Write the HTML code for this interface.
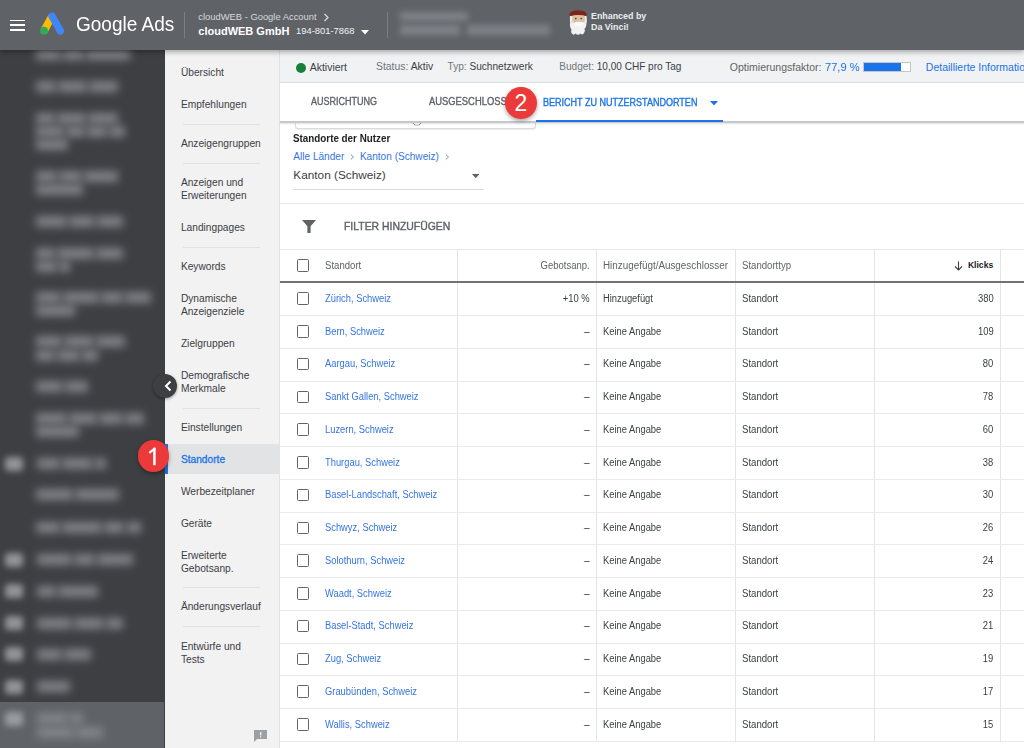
<!DOCTYPE html>
<html><head><meta charset="utf-8"><style>
html,body{margin:0;padding:0;width:1024px;height:748px;overflow:hidden;background:#fff}
body{position:relative;font-family:"Liberation Sans",sans-serif}
.t{position:absolute;white-space:nowrap}
.r{position:absolute}
.cb{position:absolute;width:12.5px;height:12.5px;box-sizing:border-box;border:1.9px solid #616468;border-radius:1.5px}
.badge{position:absolute;width:31px;height:31px;border-radius:50%;background:#ec3a3a;color:#fff;font-size:23px;line-height:33px;text-align:center;box-shadow:0 2px 4px rgba(0,0,0,.35);z-index:8}
</style></head><body>
<div class="r" style="left:0px;top:0px;width:1024px;height:748px;background:#ffffff;"></div>
<div class="r" style="left:0px;top:50px;width:165px;height:698px;background:#3d3f43;"></div>
<div class="r" style="left:0px;top:702px;width:163.5px;height:46px;background:#5f6368;"></div>
<div class="r" style="left:165px;top:50px;width:114px;height:698px;background:#f2f2f3;"></div>
<div class="r" style="left:279px;top:50px;width:1px;height:698px;background:#e0e2e4;"></div>
<div class="r" style="left:280px;top:50px;width:744px;height:32.5px;background:#f1f2f3;"></div>
<div class="r" style="left:280px;top:82px;width:744px;height:1px;background:#dadce0;"></div>
<div class="r" style="left:280px;top:83px;width:744px;height:38px;background:#ffffff;"></div>
<div class="r" style="left:280px;top:121px;width:744px;height:1.6px;background:#c6c8cb;box-shadow:0 1px 2px rgba(0,0,0,.12);z-index:2;"></div>
<div class="r" style="left:0px;top:0px;width:1024px;height:49.6px;background:#5f6368;box-shadow:0 2px 5px rgba(0,0,0,.32);z-index:5;"></div>
<div class="r" style="left:9.6px;top:19.6px;width:15.8px;height:1.8px;background:#ffffff;z-index:6;"></div>
<div class="r" style="left:9.6px;top:24.4px;width:15.8px;height:1.8px;background:#ffffff;z-index:6;"></div>
<div class="r" style="left:9.6px;top:29.2px;width:15.8px;height:1.8px;background:#ffffff;z-index:6;"></div>
<svg class="r" style="left:0;top:0;width:80px;height:50px;z-index:6" viewBox="0 0 80 50">
<path d="M51.8 16.6 L44 30.9" stroke="#fbbc04" stroke-width="7.6" stroke-linecap="butt"/>
<path d="M52.1 16.2 L60.3 30.9" stroke="#4285f4" stroke-width="7.4" stroke-linecap="round"/>
<circle cx="44" cy="30.8" r="4" fill="#34a853"/>
</svg>
<div class="t " style="left:75.50px;top:11.75px;font-size:21px;line-height:24.15px;color:#ffffff;font-weight:400;transform:scaleX(0.9053);transform-origin:left center;z-index:6;">Google Ads</div>
<div class="r" style="left:184px;top:12px;width:1.2px;height:25.6px;background:#7b7f84;z-index:6;"></div>
<div class="t " style="left:198.30px;top:12.14px;font-size:9.4px;line-height:10.81px;color:#d5d7da;font-weight:400;z-index:6;">cloudWEB - Google Account</div>
<svg class="r" style="left:323px;top:13px;width:7px;height:9px;z-index:6" viewBox="0 0 7 9"><path d="M1.5 1 L5 4.5 L1.5 8" stroke="#d5d7da" stroke-width="1.3" fill="none"/></svg>
<div class="t " style="left:198.30px;top:24.66px;font-size:11px;line-height:12.65px;color:#ffffff;font-weight:700;z-index:6;">cloudWEB GmbH</div>
<div class="t " style="left:296.00px;top:26.14px;font-size:9.4px;line-height:10.81px;color:#f1f3f4;font-weight:400;z-index:6;">194-801-7868</div>
<svg class="r" style="left:360.5px;top:29.5px;width:8px;height:5px;z-index:6" viewBox="0 0 8 5"><path d="M0 0 L8 0 L4 4.5Z" fill="#ffffff"/></svg>
<div class="r" style="left:386.6px;top:12px;width:1.2px;height:25.6px;background:#7b7f84;z-index:6;"></div>
<div class="r" style="left:400px;top:11.5px;width:68px;height:9px;background:#7f8388;filter:blur(3.4px);z-index:6"></div>
<div class="r" style="left:400px;top:24.5px;width:60px;height:10px;background:#7f8388;filter:blur(3.4px);z-index:6"></div>
<div class="r" style="left:467px;top:24.5px;width:83px;height:10px;background:#7f8388;filter:blur(3.4px);z-index:6"></div>
<svg class="r" style="left:560px;top:0;width:40px;height:40px;z-index:6" viewBox="560 0 40 40">
<path d="M570.5 21 Q569 27 571.5 29.5 Q570.5 33 572.5 34 Q574 35.5 575.5 33.5 Q578 36 580.5 33.5 Q582.5 35.5 584 33 Q585.5 31 584.5 29 Q587.5 26 585.8 20 Z" fill="#f2f2f2"/>
<path d="M570 16 Q569.5 22 571 24 L586 24 Q587.5 21 586.5 16 Z" fill="#ececec"/>
<rect x="572.3" y="14.5" width="12.5" height="8.5" rx="2.5" fill="#dcc0a4"/>
<circle cx="575.8" cy="18.6" r="0.8" fill="#4a3a30"/><circle cx="581.2" cy="18.6" r="0.8" fill="#4a3a30"/>
<path d="M573 23 Q578.5 20.5 584.5 23 Q583 26 578.5 26 Q574 26 573 23Z" fill="#fafafa"/>
<path d="M569.3 15.8 Q568.6 10.5 578 10.2 Q587.5 10.5 586.8 15.8 Q578 14.3 569.3 15.8Z" fill="#7c231b"/>
</svg>
<div class="t " style="left:591.00px;top:10.60px;font-size:8.9px;line-height:10.23px;color:#eceef0;font-weight:700;z-index:6;">Enhanced by</div>
<div class="t " style="left:591.00px;top:22.00px;font-size:8.9px;line-height:10.23px;color:#eceef0;font-weight:700;z-index:6;">Da Vinci!</div>
<div class="r" style="left:36.0px;top:48.5px;width:25.1px;height:11px;background:#85888d;filter:blur(4.2px);opacity:.9"></div>
<div class="r" style="left:63.1px;top:48.5px;width:21.3px;height:11px;background:#85888d;filter:blur(4.2px);opacity:.9"></div>
<div class="r" style="left:86.4px;top:48.5px;width:43.6px;height:11px;background:#85888d;filter:blur(4.2px);opacity:.9"></div>
<div class="r" style="left:36.0px;top:80.5px;width:19.6px;height:11px;background:#85888d;filter:blur(4.2px);opacity:.9"></div>
<div class="r" style="left:57.6px;top:80.5px;width:29.8px;height:11px;background:#85888d;filter:blur(4.2px);opacity:.9"></div>
<div class="r" style="left:89.4px;top:80.5px;width:28.6px;height:11px;background:#85888d;filter:blur(4.2px);opacity:.9"></div>
<div class="r" style="left:36.0px;top:112.5px;width:19.3px;height:11px;background:#85888d;filter:blur(4.2px);opacity:.9"></div>
<div class="r" style="left:57.3px;top:112.5px;width:29.2px;height:11px;background:#85888d;filter:blur(4.2px);opacity:.9"></div>
<div class="r" style="left:88.4px;top:112.5px;width:29.6px;height:11px;background:#85888d;filter:blur(4.2px);opacity:.9"></div>
<div class="r" style="left:36.0px;top:125.5px;width:27.5px;height:11px;background:#85888d;filter:blur(4.2px);opacity:.9"></div>
<div class="r" style="left:65.5px;top:125.5px;width:19.5px;height:11px;background:#85888d;filter:blur(4.2px);opacity:.9"></div>
<div class="r" style="left:87.1px;top:125.5px;width:20.0px;height:11px;background:#85888d;filter:blur(4.2px);opacity:.9"></div>
<div class="r" style="left:109.1px;top:125.5px;width:15.9px;height:11px;background:#85888d;filter:blur(4.2px);opacity:.9"></div>
<div class="r" style="left:36.0px;top:138.5px;width:32.0px;height:11px;background:#85888d;filter:blur(4.2px);opacity:.9"></div>
<div class="r" style="left:36.0px;top:170.5px;width:20.7px;height:11px;background:#85888d;filter:blur(4.2px);opacity:.9"></div>
<div class="r" style="left:58.7px;top:170.5px;width:22.9px;height:11px;background:#85888d;filter:blur(4.2px);opacity:.9"></div>
<div class="r" style="left:83.6px;top:170.5px;width:34.4px;height:11px;background:#85888d;filter:blur(4.2px);opacity:.9"></div>
<div class="r" style="left:36.0px;top:183.5px;width:47.0px;height:11px;background:#85888d;filter:blur(4.2px);opacity:.9"></div>
<div class="r" style="left:36.0px;top:215.5px;width:30.7px;height:11px;background:#85888d;filter:blur(4.2px);opacity:.9"></div>
<div class="r" style="left:68.7px;top:215.5px;width:26.7px;height:11px;background:#85888d;filter:blur(4.2px);opacity:.9"></div>
<div class="r" style="left:97.4px;top:215.5px;width:25.6px;height:11px;background:#85888d;filter:blur(4.2px);opacity:.9"></div>
<div class="r" style="left:36.0px;top:247.5px;width:19.0px;height:11px;background:#85888d;filter:blur(4.2px);opacity:.9"></div>
<div class="r" style="left:57.0px;top:247.5px;width:36.9px;height:11px;background:#85888d;filter:blur(4.2px);opacity:.9"></div>
<div class="r" style="left:95.9px;top:247.5px;width:27.1px;height:11px;background:#85888d;filter:blur(4.2px);opacity:.9"></div>
<div class="r" style="left:36.0px;top:260.5px;width:21.2px;height:11px;background:#85888d;filter:blur(4.2px);opacity:.9"></div>
<div class="r" style="left:59.2px;top:260.5px;width:10.8px;height:11px;background:#85888d;filter:blur(4.2px);opacity:.9"></div>
<div class="r" style="left:36.0px;top:292.1px;width:24.8px;height:11px;background:#85888d;filter:blur(4.2px);opacity:.9"></div>
<div class="r" style="left:62.8px;top:292.1px;width:36.0px;height:11px;background:#85888d;filter:blur(4.2px);opacity:.9"></div>
<div class="r" style="left:100.7px;top:292.1px;width:22.0px;height:11px;background:#85888d;filter:blur(4.2px);opacity:.9"></div>
<div class="r" style="left:124.7px;top:292.1px;width:26.3px;height:11px;background:#85888d;filter:blur(4.2px);opacity:.9"></div>
<div class="r" style="left:36.0px;top:305.0px;width:39.0px;height:11px;background:#85888d;filter:blur(4.2px);opacity:.9"></div>
<div class="r" style="left:36.0px;top:335.5px;width:26.2px;height:11px;background:#85888d;filter:blur(4.2px);opacity:.9"></div>
<div class="r" style="left:64.2px;top:335.5px;width:30.1px;height:11px;background:#85888d;filter:blur(4.2px);opacity:.9"></div>
<div class="r" style="left:96.2px;top:335.5px;width:28.8px;height:11px;background:#85888d;filter:blur(4.2px);opacity:.9"></div>
<div class="r" style="left:36.0px;top:349.9px;width:19.3px;height:11px;background:#85888d;filter:blur(4.2px);opacity:.9"></div>
<div class="r" style="left:57.3px;top:349.9px;width:22.5px;height:11px;background:#85888d;filter:blur(4.2px);opacity:.9"></div>
<div class="r" style="left:81.8px;top:349.9px;width:16.2px;height:11px;background:#85888d;filter:blur(4.2px);opacity:.9"></div>
<div class="r" style="left:36.0px;top:381.0px;width:27.4px;height:11px;background:#85888d;filter:blur(4.2px);opacity:.9"></div>
<div class="r" style="left:65.4px;top:381.0px;width:22.6px;height:11px;background:#85888d;filter:blur(4.2px);opacity:.9"></div>
<div class="r" style="left:36.0px;top:413.1px;width:30.9px;height:11px;background:#85888d;filter:blur(4.2px);opacity:.9"></div>
<div class="r" style="left:68.9px;top:413.1px;width:28.0px;height:11px;background:#85888d;filter:blur(4.2px);opacity:.9"></div>
<div class="r" style="left:98.9px;top:413.1px;width:24.6px;height:11px;background:#85888d;filter:blur(4.2px);opacity:.9"></div>
<div class="r" style="left:125.4px;top:413.1px;width:18.6px;height:11px;background:#85888d;filter:blur(4.2px);opacity:.9"></div>
<div class="r" style="left:36.0px;top:425.9px;width:43.0px;height:11px;background:#85888d;filter:blur(4.2px);opacity:.9"></div>
<div class="r" style="left:37.0px;top:458.0px;width:23.4px;height:11px;background:#85888d;filter:blur(4.2px);opacity:.9"></div>
<div class="r" style="left:62.4px;top:458.0px;width:30.6px;height:11px;background:#85888d;filter:blur(4.2px);opacity:.9"></div>
<div class="r" style="left:95.0px;top:458.0px;width:11.0px;height:11px;background:#85888d;filter:blur(4.2px);opacity:.9"></div>
<div class="r" style="left:36.0px;top:488.8px;width:37.3px;height:11px;background:#85888d;filter:blur(4.2px);opacity:.9"></div>
<div class="r" style="left:75.3px;top:488.8px;width:43.7px;height:11px;background:#85888d;filter:blur(4.2px);opacity:.9"></div>
<div class="r" style="left:36.0px;top:521.7px;width:24.3px;height:11px;background:#85888d;filter:blur(4.2px);opacity:.9"></div>
<div class="r" style="left:62.3px;top:521.7px;width:39.6px;height:11px;background:#85888d;filter:blur(4.2px);opacity:.9"></div>
<div class="r" style="left:103.9px;top:521.7px;width:20.6px;height:11px;background:#85888d;filter:blur(4.2px);opacity:.9"></div>
<div class="r" style="left:126.5px;top:521.7px;width:14.5px;height:11px;background:#85888d;filter:blur(4.2px);opacity:.9"></div>
<div class="r" style="left:37.0px;top:554.2px;width:34.7px;height:11px;background:#85888d;filter:blur(4.2px);opacity:.9"></div>
<div class="r" style="left:73.7px;top:554.2px;width:21.3px;height:11px;background:#85888d;filter:blur(4.2px);opacity:.9"></div>
<div class="r" style="left:97.0px;top:554.2px;width:36.0px;height:11px;background:#85888d;filter:blur(4.2px);opacity:.9"></div>
<div class="r" style="left:37.0px;top:585.7px;width:18.9px;height:11px;background:#85888d;filter:blur(4.2px);opacity:.9"></div>
<div class="r" style="left:57.9px;top:585.7px;width:40.1px;height:11px;background:#85888d;filter:blur(4.2px);opacity:.9"></div>
<div class="r" style="left:37.0px;top:617.8px;width:34.8px;height:11px;background:#85888d;filter:blur(4.2px);opacity:.9"></div>
<div class="r" style="left:73.8px;top:617.8px;width:30.6px;height:11px;background:#85888d;filter:blur(4.2px);opacity:.9"></div>
<div class="r" style="left:106.4px;top:617.8px;width:16.6px;height:11px;background:#85888d;filter:blur(4.2px);opacity:.9"></div>
<div class="r" style="left:37.0px;top:648.7px;width:24.9px;height:11px;background:#85888d;filter:blur(4.2px);opacity:.9"></div>
<div class="r" style="left:63.9px;top:648.7px;width:27.1px;height:11px;background:#85888d;filter:blur(4.2px);opacity:.9"></div>
<div class="r" style="left:37.0px;top:681.2px;width:33.0px;height:11px;background:#85888d;filter:blur(4.2px);opacity:.9"></div>
<div class="r" style="left:37.0px;top:713.3px;width:30.8px;height:11px;background:#85888d;filter:blur(4.2px);opacity:.9"></div>
<div class="r" style="left:69.8px;top:713.3px;width:13.2px;height:11px;background:#85888d;filter:blur(4.2px);opacity:.9"></div>
<div class="r" style="left:37.0px;top:726.5px;width:36.5px;height:11px;background:#85888d;filter:blur(4.2px);opacity:.9"></div>
<div class="r" style="left:75.5px;top:726.5px;width:27.5px;height:11px;background:#85888d;filter:blur(4.2px);opacity:.9"></div>
<div class="r" style="left:4.5px;top:456.5px;width:18px;height:14px;border-radius:3px;background:#aeb0b3;filter:blur(3px);opacity:.75"></div>
<div class="r" style="left:4.5px;top:552.7px;width:18px;height:14px;border-radius:3px;background:#aeb0b3;filter:blur(3px);opacity:.75"></div>
<div class="r" style="left:4.5px;top:584.2px;width:18px;height:14px;border-radius:3px;background:#aeb0b3;filter:blur(3px);opacity:.75"></div>
<div class="r" style="left:4.5px;top:616.3px;width:18px;height:14px;border-radius:3px;background:#aeb0b3;filter:blur(3px);opacity:.75"></div>
<div class="r" style="left:4.5px;top:647.2px;width:18px;height:14px;border-radius:3px;background:#aeb0b3;filter:blur(3px);opacity:.75"></div>
<div class="r" style="left:4.5px;top:679.7px;width:18px;height:14px;border-radius:3px;background:#aeb0b3;filter:blur(3px);opacity:.75"></div>
<div class="r" style="left:4.5px;top:711.8px;width:18px;height:14px;border-radius:3px;background:#aeb0b3;filter:blur(3px);opacity:.75"></div>
<div class="r" style="left:165px;top:443.6px;width:114px;height:30.4px;background:#e2e3e5;"></div>
<div class="r" style="left:165px;top:443.6px;width:3px;height:30.4px;background:#1a73e8;"></div>
<div class="t " style="left:180.90px;top:66.80px;font-size:10.2px;line-height:11.73px;color:#3c4043;font-weight:400;">Übersicht</div>
<div class="t " style="left:180.90px;top:98.90px;font-size:10.2px;line-height:11.73px;color:#3c4043;font-weight:400;">Empfehlungen</div>
<div class="t " style="left:180.90px;top:138.20px;font-size:10.2px;line-height:11.73px;color:#3c4043;font-weight:400;">Anzeigengruppen</div>
<div class="t " style="left:180.90px;top:177.20px;font-size:10.2px;line-height:11.73px;color:#3c4043;font-weight:400;">Anzeigen und</div>
<div class="t " style="left:180.90px;top:190.20px;font-size:10.2px;line-height:11.73px;color:#3c4043;font-weight:400;">Erweiterungen</div>
<div class="t " style="left:180.90px;top:221.60px;font-size:10.2px;line-height:11.73px;color:#3c4043;font-weight:400;">Landingpages</div>
<div class="t " style="left:180.90px;top:260.60px;font-size:10.2px;line-height:11.73px;color:#3c4043;font-weight:400;">Keywords</div>
<div class="t " style="left:180.90px;top:292.60px;font-size:10.2px;line-height:11.73px;color:#3c4043;font-weight:400;">Dynamische</div>
<div class="t " style="left:180.90px;top:305.60px;font-size:10.2px;line-height:11.73px;color:#3c4043;font-weight:400;">Anzeigenziele</div>
<div class="t " style="left:180.90px;top:337.60px;font-size:10.2px;line-height:11.73px;color:#3c4043;font-weight:400;">Zielgruppen</div>
<div class="t " style="left:180.90px;top:369.60px;font-size:10.2px;line-height:11.73px;color:#3c4043;font-weight:400;">Demografische</div>
<div class="t " style="left:180.90px;top:382.60px;font-size:10.2px;line-height:11.73px;color:#3c4043;font-weight:400;">Merkmale</div>
<div class="t " style="left:180.90px;top:421.60px;font-size:10.2px;line-height:11.73px;color:#3c4043;font-weight:400;">Einstellungen</div>
<div class="t " style="left:180.90px;top:453.60px;font-size:10.2px;line-height:11.73px;color:#1a73e8;font-weight:400;-webkit-text-stroke:0.3px #1a73e8;">Standorte</div>
<div class="t " style="left:180.90px;top:485.60px;font-size:10.2px;line-height:11.73px;color:#3c4043;font-weight:400;">Werbezeitplaner</div>
<div class="t " style="left:180.90px;top:517.60px;font-size:10.2px;line-height:11.73px;color:#3c4043;font-weight:400;">Geräte</div>
<div class="t " style="left:180.90px;top:549.60px;font-size:10.2px;line-height:11.73px;color:#3c4043;font-weight:400;">Erweiterte</div>
<div class="t " style="left:180.90px;top:562.60px;font-size:10.2px;line-height:11.73px;color:#3c4043;font-weight:400;">Gebotsanp.</div>
<div class="t " style="left:180.90px;top:600.60px;font-size:10.2px;line-height:11.73px;color:#3c4043;font-weight:400;">Änderungsverlauf</div>
<div class="t " style="left:180.90px;top:640.60px;font-size:10.2px;line-height:11.73px;color:#3c4043;font-weight:400;">Entwürfe und</div>
<div class="t " style="left:180.90px;top:653.60px;font-size:10.2px;line-height:11.73px;color:#3c4043;font-weight:400;">Tests</div>
<div class="r" style="left:182.7px;top:124px;width:77.6px;height:1px;background:#e0e1e3;"></div>
<div class="r" style="left:182.7px;top:163.4px;width:77.6px;height:1px;background:#e0e1e3;"></div>
<div class="r" style="left:182.7px;top:247.3px;width:77.6px;height:1px;background:#e0e1e3;"></div>
<div class="r" style="left:182.7px;top:407.9px;width:77.6px;height:1px;background:#e0e1e3;"></div>
<div class="r" style="left:182.7px;top:586.8px;width:77.6px;height:1px;background:#e0e1e3;"></div>
<div class="r" style="left:182.7px;top:626.2px;width:77.6px;height:1px;background:#e0e1e3;"></div>
<svg class="r" style="left:254px;top:730px;width:13px;height:12px" viewBox="0 0 13 12"><path d="M0 0H13V9H3L0 12Z" fill="#9aa0a6"/><rect x="6" y="2" width="1.3" height="3.5" fill="#f1f3f4"/><rect x="6" y="6.3" width="1.3" height="1.3" fill="#f1f3f4"/></svg>
<div class="r" style="left:152.5px;top:373.7px;width:24px;height:24px;border-radius:50%;background:#3d3f43;box-shadow:0 1px 3px rgba(0,0,0,.4);z-index:3"></div>
<svg class="r" style="left:164.3px;top:380px;width:8px;height:12px;z-index:4" viewBox="0 0 8 12"><path d="M6.5 1.5 L2 6 L6.5 10.5" stroke="#fff" stroke-width="2" fill="none"/></svg>
<div class="r" style="left:296px;top:62.7px;width:10px;height:10px;border-radius:50%;background:#188038"></div>
<div class="t " style="left:309.70px;top:61.12px;font-size:10.5px;line-height:12.07px;color:#3c4043;font-weight:400;">Aktiviert</div>
<div class="t " style="left:376.00px;top:61.22px;font-size:10.4px;line-height:11.96px;color:#3c4043;font-weight:400;"><span style="color:#70757a">Status:</span> Aktiv</div>
<div class="t " style="left:447.60px;top:61.49px;font-size:10.1px;line-height:11.61px;color:#3c4043;font-weight:400;"><span style="color:#70757a">Typ:</span> Suchnetzwerk</div>
<div class="t " style="left:559.30px;top:61.04px;font-size:10.05px;line-height:11.56px;color:#3c4043;font-weight:400;"><span style="color:#70757a">Budget:</span> 10,00 CHF pro Tag</div>
<div class="t " style="left:729.80px;top:60.72px;font-size:10.5px;line-height:12.07px;color:#5f6368;font-weight:400;">Optimierungsfaktor:</div>
<div class="t " style="left:824.80px;top:59.91px;font-size:11.6px;line-height:13.34px;color:#1a73e8;font-weight:400;transform:scaleX(0.9581);transform-origin:left center;">77,9 %</div>
<div class="r" style="left:863.4px;top:61.5px;width:48px;height:10.4px;background:#ffffff;box-sizing:border-box;border:1px solid #c4c7ca;"></div>
<div class="r" style="left:864.4px;top:62.5px;width:36.7px;height:8.4px;background:#1a73e8;"></div>
<div class="t " style="left:925.80px;top:60.72px;font-size:10.5px;line-height:12.07px;color:#1a73e8;font-weight:400;">Detaillierte Informationen</div>
<div class="t " style="left:311.20px;top:96.19px;font-size:10px;line-height:11.50px;color:#5f6368;font-weight:400;transform:scaleX(0.9013);transform-origin:left center;-webkit-text-stroke:0.35px #5f6368;">AUSRICHTUNG</div>
<div class="t " style="left:429.30px;top:96.19px;font-size:10px;line-height:11.50px;color:#5f6368;font-weight:400;transform:scaleX(0.9384);transform-origin:left center;-webkit-text-stroke:0.35px #5f6368;">AUSGESCHLOSSENE</div>
<div class="t " style="left:542.70px;top:96.69px;font-size:10px;line-height:11.50px;color:#1a73e8;font-weight:400;transform:scaleX(0.9023);transform-origin:left center;-webkit-text-stroke:0.35px #1a73e8;">BERICHT ZU NUTZERSTANDORTEN</div>
<svg class="r" style="left:709.5px;top:100.5px;width:8px;height:4.5px" viewBox="0 0 8 4.5"><path d="M0 0H8L4 4.5Z" fill="#1a73e8"/></svg>
<div class="r" style="left:535.9px;top:120px;width:187.4px;height:2.2px;background:#1a73e8;z-index:2;"></div>
<div class="r" style="left:295px;top:121px;width:241.3px;height:7.8px;box-sizing:border-box;background:#fff;border:1px solid #dadce0;border-top:none;border-radius:0 0 3px 3px;box-shadow:0 1px 1px rgba(0,0,0,.08);z-index:1"></div>
<div class="r" style="left:411.5px;top:115.5px;width:10px;height:10px;border-radius:50%;border:1.3px solid #80868b;box-sizing:border-box;z-index:1;clip-path:inset(6px 0 0 0)"></div>
<div class="badge" style="left:505.3px;top:87.4px;width:31.4px;height:31.8px;">2</div>
<div class="badge" style="left:137.6px;top:440.3px;width:31.8px;height:31.8px;"></div>
<svg class="r" style="left:0;top:0;width:200px;height:500px;z-index:9" viewBox="0 0 200 500"><path d="M154.4 447.8 V465.2" stroke="#fff" stroke-width="2.5"/><path d="M155.2 448.2 L149.3 452.8" stroke="#fff" stroke-width="2.2"/></svg>
<div class="t " style="left:293.30px;top:133.02px;font-size:10.4px;line-height:11.96px;color:#202124;font-weight:700;transform:scaleX(0.9459);transform-origin:left center;">Standorte der Nutzer</div>
<div class="t " style="left:293.30px;top:150.91px;font-size:10.08px;line-height:11.59px;color:#3575e0;font-weight:400;">Alle Länder</div>
<svg class="r" style="left:349px;top:153px;width:7px;height:8px" viewBox="0 0 7 8"><path d="M1.8 1.5 L4.5 4 L1.8 6.5" stroke="#8a8e93" stroke-width="1" fill="none"/></svg>
<div class="t " style="left:359.90px;top:150.91px;font-size:10.08px;line-height:11.59px;color:#3575e0;font-weight:400;">Kanton (Schweiz)</div>
<svg class="r" style="left:443.5px;top:153px;width:7px;height:8px" viewBox="0 0 7 8"><path d="M1.8 1.5 L4.5 4 L1.8 6.5" stroke="#8a8e93" stroke-width="1" fill="none"/></svg>
<div class="t " style="left:293.30px;top:169.43px;font-size:11.8px;line-height:13.57px;color:#3c4043;font-weight:400;">Kanton (Schweiz)</div>
<svg class="r" style="left:471.5px;top:174.3px;width:7.5px;height:4.3px" viewBox="0 0 7.5 4.3"><path d="M0 0H7.5L3.75 4.3Z" fill="#5f6368"/></svg>
<div class="r" style="left:293px;top:188.6px;width:191px;height:1px;background:#dadce0;"></div>
<div class="r" style="left:280px;top:202.6px;width:744px;height:1px;background:#e8eaed;"></div>
<svg class="r" style="left:302px;top:219.5px;width:14px;height:13.5px" viewBox="0 0 14 13.5"><path d="M0 0H14L8.6 6.3V13.5H5.4V6.3Z" fill="#5f6368"/></svg>
<div class="t " style="left:344.00px;top:220.05px;font-size:10.8px;line-height:12.42px;color:#5f6368;font-weight:400;transform:scaleX(0.9646);transform-origin:left center;-webkit-text-stroke:0.4px #5f6368;">FILTER HINZUFÜGEN</div>
<div class="r" style="left:280px;top:248.6px;width:744px;height:1px;background:#e8eaed;"></div>
<div class="r" style="left:457px;top:249px;width:1px;height:492px;background:#e3e4e8;"></div>
<div class="r" style="left:596px;top:249px;width:1px;height:492px;background:#e3e4e8;"></div>
<div class="r" style="left:735px;top:249px;width:1px;height:492px;background:#e3e4e8;"></div>
<div class="r" style="left:874.3px;top:249px;width:1px;height:492px;background:#e3e4e8;"></div>
<div class="r" style="left:1000.3px;top:249px;width:1px;height:492px;background:#e3e4e8;"></div>
<div class="r" style="left:280px;top:281px;width:744px;height:2px;background:#6f7377;"></div>
<div class="cb" style="left:296.5px;top:259.15px"></div>
<div class="t " style="left:325.30px;top:259.88px;font-size:10px;line-height:11.50px;color:#5f6368;font-weight:400;transform:scaleX(0.9600);transform-origin:left center;">Standort</div>
<div class="t " style="right:434.40px;top:259.88px;font-size:10px;line-height:11.50px;color:#5f6368;font-weight:400;transform:scaleX(0.9500);transform-origin:right center;">Gebotsanp.</div>
<div class="t " style="left:603.20px;top:259.88px;font-size:10px;line-height:11.50px;color:#5f6368;font-weight:400;transform:scaleX(0.9863);transform-origin:left center;">Hinzugefügt/Ausgeschlosser</div>
<div class="t " style="left:742.00px;top:259.88px;font-size:10px;line-height:11.50px;color:#5f6368;font-weight:400;transform:scaleX(0.9600);transform-origin:left center;">Standorttyp</div>
<div class="t " style="right:30.80px;top:261.18px;font-size:8.6px;line-height:9.89px;color:#202124;font-weight:700;">Klicks</div>
<svg class="r" style="left:953.5px;top:261px;width:9px;height:10px" viewBox="0 0 9 10"><path d="M4.5 0.5V9 M1 5.5 L4.5 9 L8 5.5" stroke="#3c4043" stroke-width="1.1" fill="none"/></svg>
<div class="cb" style="left:296.5px;top:292.35px"></div>
<div class="t " style="left:325.40px;top:292.88px;font-size:10px;line-height:11.50px;color:#3575e0;font-weight:400;transform:scaleX(0.9350);transform-origin:left center;">Zürich, Schweiz</div>
<div class="t " style="right:434.40px;top:292.88px;font-size:10px;line-height:11.50px;color:#3c4043;font-weight:400;transform:scaleX(0.9400);transform-origin:right center;">+10 %</div>
<div class="t " style="left:603.20px;top:292.88px;font-size:10px;line-height:11.50px;color:#3c4043;font-weight:400;transform:scaleX(0.9350);transform-origin:left center;">Hinzugefügt</div>
<div class="t " style="left:742.00px;top:292.88px;font-size:10px;line-height:11.50px;color:#3c4043;font-weight:400;transform:scaleX(0.9600);transform-origin:left center;">Standort</div>
<div class="t " style="right:30.80px;top:292.88px;font-size:10px;line-height:11.50px;color:#3c4043;font-weight:400;transform:scaleX(0.9400);transform-origin:right center;">380</div>
<div class="r" style="left:280px;top:315.0px;width:744px;height:1px;background:#e8eaed;"></div>
<div class="cb" style="left:296.5px;top:325.10px"></div>
<div class="t " style="left:325.40px;top:325.63px;font-size:10px;line-height:11.50px;color:#3575e0;font-weight:400;transform:scaleX(0.9350);transform-origin:left center;">Bern, Schweiz</div>
<div class="t " style="right:434.40px;top:325.63px;font-size:10px;line-height:11.50px;color:#3c4043;font-weight:400;transform:scaleX(1.0000);transform-origin:right center;">–</div>
<div class="t " style="left:603.20px;top:325.63px;font-size:10px;line-height:11.50px;color:#3c4043;font-weight:400;transform:scaleX(0.9350);transform-origin:left center;">Keine Angabe</div>
<div class="t " style="left:742.00px;top:325.63px;font-size:10px;line-height:11.50px;color:#3c4043;font-weight:400;transform:scaleX(0.9600);transform-origin:left center;">Standort</div>
<div class="t " style="right:30.80px;top:325.63px;font-size:10px;line-height:11.50px;color:#3c4043;font-weight:400;transform:scaleX(0.9400);transform-origin:right center;">109</div>
<div class="r" style="left:280px;top:347.75px;width:744px;height:1px;background:#e8eaed;"></div>
<div class="cb" style="left:296.5px;top:357.85px"></div>
<div class="t " style="left:325.40px;top:358.38px;font-size:10px;line-height:11.50px;color:#3575e0;font-weight:400;transform:scaleX(0.9350);transform-origin:left center;">Aargau, Schweiz</div>
<div class="t " style="right:434.40px;top:358.38px;font-size:10px;line-height:11.50px;color:#3c4043;font-weight:400;transform:scaleX(1.0000);transform-origin:right center;">–</div>
<div class="t " style="left:603.20px;top:358.38px;font-size:10px;line-height:11.50px;color:#3c4043;font-weight:400;transform:scaleX(0.9350);transform-origin:left center;">Keine Angabe</div>
<div class="t " style="left:742.00px;top:358.38px;font-size:10px;line-height:11.50px;color:#3c4043;font-weight:400;transform:scaleX(0.9600);transform-origin:left center;">Standort</div>
<div class="t " style="right:30.80px;top:358.38px;font-size:10px;line-height:11.50px;color:#3c4043;font-weight:400;transform:scaleX(0.9400);transform-origin:right center;">80</div>
<div class="r" style="left:280px;top:380.5px;width:744px;height:1px;background:#e8eaed;"></div>
<div class="cb" style="left:296.5px;top:390.60px"></div>
<div class="t " style="left:325.40px;top:391.13px;font-size:10px;line-height:11.50px;color:#3575e0;font-weight:400;transform:scaleX(0.9350);transform-origin:left center;">Sankt Gallen, Schweiz</div>
<div class="t " style="right:434.40px;top:391.13px;font-size:10px;line-height:11.50px;color:#3c4043;font-weight:400;transform:scaleX(1.0000);transform-origin:right center;">–</div>
<div class="t " style="left:603.20px;top:391.13px;font-size:10px;line-height:11.50px;color:#3c4043;font-weight:400;transform:scaleX(0.9350);transform-origin:left center;">Keine Angabe</div>
<div class="t " style="left:742.00px;top:391.13px;font-size:10px;line-height:11.50px;color:#3c4043;font-weight:400;transform:scaleX(0.9600);transform-origin:left center;">Standort</div>
<div class="t " style="right:30.80px;top:391.13px;font-size:10px;line-height:11.50px;color:#3c4043;font-weight:400;transform:scaleX(0.9400);transform-origin:right center;">78</div>
<div class="r" style="left:280px;top:413.25px;width:744px;height:1px;background:#e8eaed;"></div>
<div class="cb" style="left:296.5px;top:423.35px"></div>
<div class="t " style="left:325.40px;top:423.88px;font-size:10px;line-height:11.50px;color:#3575e0;font-weight:400;transform:scaleX(0.9350);transform-origin:left center;">Luzern, Schweiz</div>
<div class="t " style="right:434.40px;top:423.88px;font-size:10px;line-height:11.50px;color:#3c4043;font-weight:400;transform:scaleX(1.0000);transform-origin:right center;">–</div>
<div class="t " style="left:603.20px;top:423.88px;font-size:10px;line-height:11.50px;color:#3c4043;font-weight:400;transform:scaleX(0.9350);transform-origin:left center;">Keine Angabe</div>
<div class="t " style="left:742.00px;top:423.88px;font-size:10px;line-height:11.50px;color:#3c4043;font-weight:400;transform:scaleX(0.9600);transform-origin:left center;">Standort</div>
<div class="t " style="right:30.80px;top:423.88px;font-size:10px;line-height:11.50px;color:#3c4043;font-weight:400;transform:scaleX(0.9400);transform-origin:right center;">60</div>
<div class="r" style="left:280px;top:446.0px;width:744px;height:1px;background:#e8eaed;"></div>
<div class="cb" style="left:296.5px;top:456.10px"></div>
<div class="t " style="left:325.40px;top:456.63px;font-size:10px;line-height:11.50px;color:#3575e0;font-weight:400;transform:scaleX(0.9350);transform-origin:left center;">Thurgau, Schweiz</div>
<div class="t " style="right:434.40px;top:456.63px;font-size:10px;line-height:11.50px;color:#3c4043;font-weight:400;transform:scaleX(1.0000);transform-origin:right center;">–</div>
<div class="t " style="left:603.20px;top:456.63px;font-size:10px;line-height:11.50px;color:#3c4043;font-weight:400;transform:scaleX(0.9350);transform-origin:left center;">Keine Angabe</div>
<div class="t " style="left:742.00px;top:456.63px;font-size:10px;line-height:11.50px;color:#3c4043;font-weight:400;transform:scaleX(0.9600);transform-origin:left center;">Standort</div>
<div class="t " style="right:30.80px;top:456.63px;font-size:10px;line-height:11.50px;color:#3c4043;font-weight:400;transform:scaleX(0.9400);transform-origin:right center;">38</div>
<div class="r" style="left:280px;top:478.75px;width:744px;height:1px;background:#e8eaed;"></div>
<div class="cb" style="left:296.5px;top:488.85px"></div>
<div class="t " style="left:325.40px;top:489.38px;font-size:10px;line-height:11.50px;color:#3575e0;font-weight:400;transform:scaleX(0.9350);transform-origin:left center;">Basel-Landschaft, Schweiz</div>
<div class="t " style="right:434.40px;top:489.38px;font-size:10px;line-height:11.50px;color:#3c4043;font-weight:400;transform:scaleX(1.0000);transform-origin:right center;">–</div>
<div class="t " style="left:603.20px;top:489.38px;font-size:10px;line-height:11.50px;color:#3c4043;font-weight:400;transform:scaleX(0.9350);transform-origin:left center;">Keine Angabe</div>
<div class="t " style="left:742.00px;top:489.38px;font-size:10px;line-height:11.50px;color:#3c4043;font-weight:400;transform:scaleX(0.9600);transform-origin:left center;">Standort</div>
<div class="t " style="right:30.80px;top:489.38px;font-size:10px;line-height:11.50px;color:#3c4043;font-weight:400;transform:scaleX(0.9400);transform-origin:right center;">30</div>
<div class="r" style="left:280px;top:511.5px;width:744px;height:1px;background:#e8eaed;"></div>
<div class="cb" style="left:296.5px;top:521.60px"></div>
<div class="t " style="left:325.40px;top:522.14px;font-size:10px;line-height:11.50px;color:#3575e0;font-weight:400;transform:scaleX(0.9350);transform-origin:left center;">Schwyz, Schweiz</div>
<div class="t " style="right:434.40px;top:522.14px;font-size:10px;line-height:11.50px;color:#3c4043;font-weight:400;transform:scaleX(1.0000);transform-origin:right center;">–</div>
<div class="t " style="left:603.20px;top:522.14px;font-size:10px;line-height:11.50px;color:#3c4043;font-weight:400;transform:scaleX(0.9350);transform-origin:left center;">Keine Angabe</div>
<div class="t " style="left:742.00px;top:522.14px;font-size:10px;line-height:11.50px;color:#3c4043;font-weight:400;transform:scaleX(0.9600);transform-origin:left center;">Standort</div>
<div class="t " style="right:30.80px;top:522.14px;font-size:10px;line-height:11.50px;color:#3c4043;font-weight:400;transform:scaleX(0.9400);transform-origin:right center;">26</div>
<div class="r" style="left:280px;top:544.25px;width:744px;height:1px;background:#e8eaed;"></div>
<div class="cb" style="left:296.5px;top:554.35px"></div>
<div class="t " style="left:325.40px;top:554.89px;font-size:10px;line-height:11.50px;color:#3575e0;font-weight:400;transform:scaleX(0.9350);transform-origin:left center;">Solothurn, Schweiz</div>
<div class="t " style="right:434.40px;top:554.89px;font-size:10px;line-height:11.50px;color:#3c4043;font-weight:400;transform:scaleX(1.0000);transform-origin:right center;">–</div>
<div class="t " style="left:603.20px;top:554.89px;font-size:10px;line-height:11.50px;color:#3c4043;font-weight:400;transform:scaleX(0.9350);transform-origin:left center;">Keine Angabe</div>
<div class="t " style="left:742.00px;top:554.89px;font-size:10px;line-height:11.50px;color:#3c4043;font-weight:400;transform:scaleX(0.9600);transform-origin:left center;">Standort</div>
<div class="t " style="right:30.80px;top:554.89px;font-size:10px;line-height:11.50px;color:#3c4043;font-weight:400;transform:scaleX(0.9400);transform-origin:right center;">24</div>
<div class="r" style="left:280px;top:577.0px;width:744px;height:1px;background:#e8eaed;"></div>
<div class="cb" style="left:296.5px;top:587.10px"></div>
<div class="t " style="left:325.40px;top:587.64px;font-size:10px;line-height:11.50px;color:#3575e0;font-weight:400;transform:scaleX(0.9350);transform-origin:left center;">Waadt, Schweiz</div>
<div class="t " style="right:434.40px;top:587.64px;font-size:10px;line-height:11.50px;color:#3c4043;font-weight:400;transform:scaleX(1.0000);transform-origin:right center;">–</div>
<div class="t " style="left:603.20px;top:587.64px;font-size:10px;line-height:11.50px;color:#3c4043;font-weight:400;transform:scaleX(0.9350);transform-origin:left center;">Keine Angabe</div>
<div class="t " style="left:742.00px;top:587.64px;font-size:10px;line-height:11.50px;color:#3c4043;font-weight:400;transform:scaleX(0.9600);transform-origin:left center;">Standort</div>
<div class="t " style="right:30.80px;top:587.64px;font-size:10px;line-height:11.50px;color:#3c4043;font-weight:400;transform:scaleX(0.9400);transform-origin:right center;">23</div>
<div class="r" style="left:280px;top:609.75px;width:744px;height:1px;background:#e8eaed;"></div>
<div class="cb" style="left:296.5px;top:619.85px"></div>
<div class="t " style="left:325.40px;top:620.39px;font-size:10px;line-height:11.50px;color:#3575e0;font-weight:400;transform:scaleX(0.9350);transform-origin:left center;">Basel-Stadt, Schweiz</div>
<div class="t " style="right:434.40px;top:620.39px;font-size:10px;line-height:11.50px;color:#3c4043;font-weight:400;transform:scaleX(1.0000);transform-origin:right center;">–</div>
<div class="t " style="left:603.20px;top:620.39px;font-size:10px;line-height:11.50px;color:#3c4043;font-weight:400;transform:scaleX(0.9350);transform-origin:left center;">Keine Angabe</div>
<div class="t " style="left:742.00px;top:620.39px;font-size:10px;line-height:11.50px;color:#3c4043;font-weight:400;transform:scaleX(0.9600);transform-origin:left center;">Standort</div>
<div class="t " style="right:30.80px;top:620.39px;font-size:10px;line-height:11.50px;color:#3c4043;font-weight:400;transform:scaleX(0.9400);transform-origin:right center;">21</div>
<div class="r" style="left:280px;top:642.5px;width:744px;height:1px;background:#e8eaed;"></div>
<div class="cb" style="left:296.5px;top:652.60px"></div>
<div class="t " style="left:325.40px;top:653.14px;font-size:10px;line-height:11.50px;color:#3575e0;font-weight:400;transform:scaleX(0.9350);transform-origin:left center;">Zug, Schweiz</div>
<div class="t " style="right:434.40px;top:653.14px;font-size:10px;line-height:11.50px;color:#3c4043;font-weight:400;transform:scaleX(1.0000);transform-origin:right center;">–</div>
<div class="t " style="left:603.20px;top:653.14px;font-size:10px;line-height:11.50px;color:#3c4043;font-weight:400;transform:scaleX(0.9350);transform-origin:left center;">Keine Angabe</div>
<div class="t " style="left:742.00px;top:653.14px;font-size:10px;line-height:11.50px;color:#3c4043;font-weight:400;transform:scaleX(0.9600);transform-origin:left center;">Standort</div>
<div class="t " style="right:30.80px;top:653.14px;font-size:10px;line-height:11.50px;color:#3c4043;font-weight:400;transform:scaleX(0.9400);transform-origin:right center;">19</div>
<div class="r" style="left:280px;top:675.25px;width:744px;height:1px;background:#e8eaed;"></div>
<div class="cb" style="left:296.5px;top:685.35px"></div>
<div class="t " style="left:325.40px;top:685.89px;font-size:10px;line-height:11.50px;color:#3575e0;font-weight:400;transform:scaleX(0.9350);transform-origin:left center;">Graubünden, Schweiz</div>
<div class="t " style="right:434.40px;top:685.89px;font-size:10px;line-height:11.50px;color:#3c4043;font-weight:400;transform:scaleX(1.0000);transform-origin:right center;">–</div>
<div class="t " style="left:603.20px;top:685.89px;font-size:10px;line-height:11.50px;color:#3c4043;font-weight:400;transform:scaleX(0.9350);transform-origin:left center;">Keine Angabe</div>
<div class="t " style="left:742.00px;top:685.89px;font-size:10px;line-height:11.50px;color:#3c4043;font-weight:400;transform:scaleX(0.9600);transform-origin:left center;">Standort</div>
<div class="t " style="right:30.80px;top:685.89px;font-size:10px;line-height:11.50px;color:#3c4043;font-weight:400;transform:scaleX(0.9400);transform-origin:right center;">17</div>
<div class="r" style="left:280px;top:708.0px;width:744px;height:1px;background:#e8eaed;"></div>
<div class="cb" style="left:296.5px;top:718.10px"></div>
<div class="t " style="left:325.40px;top:718.64px;font-size:10px;line-height:11.50px;color:#3575e0;font-weight:400;transform:scaleX(0.9350);transform-origin:left center;">Wallis, Schweiz</div>
<div class="t " style="right:434.40px;top:718.64px;font-size:10px;line-height:11.50px;color:#3c4043;font-weight:400;transform:scaleX(1.0000);transform-origin:right center;">–</div>
<div class="t " style="left:603.20px;top:718.64px;font-size:10px;line-height:11.50px;color:#3c4043;font-weight:400;transform:scaleX(0.9350);transform-origin:left center;">Keine Angabe</div>
<div class="t " style="left:742.00px;top:718.64px;font-size:10px;line-height:11.50px;color:#3c4043;font-weight:400;transform:scaleX(0.9600);transform-origin:left center;">Standort</div>
<div class="t " style="right:30.80px;top:718.64px;font-size:10px;line-height:11.50px;color:#3c4043;font-weight:400;transform:scaleX(0.9400);transform-origin:right center;">15</div>
<div class="r" style="left:280px;top:740.75px;width:744px;height:1px;background:#e8eaed;"></div>
</body></html>
